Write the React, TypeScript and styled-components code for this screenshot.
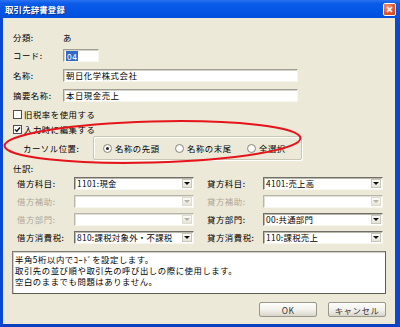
import React from "react";
import styled, { createGlobalStyle } from "styled-components";

const GlobalStyle = createGlobalStyle`
  html, body {
    margin: 0;
    padding: 0;
    background: #ece9d8;
  }
  body {
    width: 400px;
    height: 327px;
    overflow: hidden;
  }
`;

const uiFont = `"Noto Sans CJK JP", "Liberation Sans", sans-serif`;

const Window = styled.div`
  position: relative;
  width: 400px;
  height: 327px;
  display: flex;
  flex-direction: column;
  font-family: ${uiFont};
  font-size: 8.4px;
  letter-spacing: 0.55px;
  line-height: 13px;
  color: #000;
`;

const TitleBar = styled.div`
  flex: none;
  height: 18px;
  display: flex;
  align-items: center;
  justify-content: space-between;
  padding: 0 4px 0 5px;
  background: linear-gradient(#2b72ef 0%, #0a5be8 20%, #0355e4 60%, #0250dd 100%);
`;

const Title = styled.span`
  color: #fff;
  font-weight: bold;
  letter-spacing: 0.2px;
  text-shadow: 1px 1px 0 #0a2e8a;
`;

const CloseButton = styled.div`
  width: 13px;
  height: 13px;
  box-sizing: border-box;
  border: 1px solid #fff;
  border-radius: 2px;
  background: radial-gradient(circle at 35% 30%, #f09a7c, #e0542c 60%, #c4401c);
  display: flex;
  align-items: center;
  justify-content: center;
`;

const Body = styled.div`
  flex: 1;
  display: flex;
  flex-direction: column;
  background: #ece9d8;
  border-left: 3px solid #0a48d4;
  border-right: 5px solid #0a48d4;
  border-bottom: 3px solid #0a3fc0;
  padding: 0 9px;
`;

const FieldRow = styled.div<{ $space: number; $indent?: number }>`
  display: flex;
  align-items: center;
  height: 13px;
  margin-top: ${(p) => p.$space}px;
  padding-left: ${(p) => p.$indent ?? 1}px;
`;

const Label = styled.span<{ $width?: number; $disabled?: boolean }>`
  flex: none;
  width: ${(p) => (p.$width ? `${p.$width}px` : "auto")};
  white-space: nowrap;
  color: ${(p) => (p.$disabled ? "#aca899" : "#000")};
`;

const TextBox = styled.div<{ $width: number }>`
  box-sizing: border-box;
  width: ${(p) => p.$width}px;
  height: 13px;
  padding-left: 2px;
  background: #fff;
  border: 1px solid;
  border-color: #a09e92 #f6f5ee #f6f5ee #a09e92;
  box-shadow: inset 1px 1px 0 #d6d3c6;
  display: flex;
  align-items: center;
  white-space: nowrap;
`;

const Selected = styled.span`
  background: #316ac5;
  color: #fff;
  padding: 0 1px;
  line-height: 10px;
`;

const CheckRow = styled.label<{ $space: number }>`
  display: flex;
  align-items: center;
  gap: 2px;
  height: 13px;
  margin-top: ${(p) => p.$space}px;
  padding-left: 1px;
`;

const CheckBox = styled.span`
  flex: none;
  box-sizing: border-box;
  width: 9px;
  height: 9px;
  border: 1px solid #4d4d4d;
  background: #fff;
  display: flex;
  align-items: center;
  justify-content: center;
`;

const CursorRow = styled.div`
  display: flex;
  align-items: center;
  height: 24px;
  padding-left: 11px;
`;

const GroupBox = styled.div`
  box-sizing: border-box;
  width: 209px;
  height: 24px;
  border: 1px solid #c9c6b6;
  box-shadow: inset 1px 1px 0 #fff, 1px 1px 0 #fff;
  border-radius: 2px;
  display: flex;
  align-items: center;
  padding-left: 9px;
`;

const RadioItem = styled.span`
  flex: none;
  width: 72px;
  display: flex;
  align-items: center;
  gap: 3px;
  white-space: nowrap;
`;

const Radio = styled.span<{ $checked?: boolean }>`
  flex: none;
  box-sizing: border-box;
  width: 9px;
  height: 9px;
  border-radius: 50%;
  border: 1px solid #8b8a85;
  background: radial-gradient(circle, #fff 40%, #e4e2d8);
  display: flex;
  align-items: center;
  justify-content: center;
  &::after {
    content: "";
    display: ${(p) => (p.$checked ? "block" : "none")};
    width: 3px;
    height: 3px;
    border-radius: 50%;
    background: #222;
  }
`;

const LedgerList = styled.div`
  display: flex;
  flex-direction: column;
  gap: 5px;
  margin-top: 2px;
  padding-left: 5px;
`;

const LedgerRow = styled.div`
  display: flex;
  gap: 13px;
`;

const Side = styled.div`
  display: flex;
  align-items: center;
`;

const Combo = styled.div<{ $disabled?: boolean }>`
  box-sizing: border-box;
  width: 120px;
  height: 13px;
  background: #fff;
  border: 1px solid;
  border-color: ${(p) =>
    p.$disabled ? "#b7b4a8 #f6f5ee #f6f5ee #b7b4a8" : "#6f6e68 #f6f5ee #f6f5ee #6f6e68"};
  box-shadow: inset 1px 1px 0 ${(p) => (p.$disabled ? "#e2e0d6" : "#b9b6aa")};
  display: flex;
  align-items: center;
  justify-content: space-between;
  padding-left: 2px;
  letter-spacing: 0.3px;
`;

const ComboText = styled.span`
  white-space: nowrap;
  overflow: hidden;
`;

const DropButton = styled.span<{ $disabled?: boolean }>`
  flex: none;
  box-sizing: border-box;
  width: 10px;
  height: 9px;
  margin: 0 1px 0 2px;
  border: 1px solid ${(p) => (p.$disabled ? "#dedbd0" : "#c9c6ba")};
  background: linear-gradient(#fbfbf8, #e6e3d8);
  display: flex;
  align-items: center;
  justify-content: center;
  &::after {
    content: "";
    width: 0;
    height: 0;
    border-left: 3px solid transparent;
    border-right: 3px solid transparent;
    border-top: 3px solid ${(p) => (p.$disabled ? "#b5b2a6" : "#111")};
  }
`;

const Memo = styled.div`
  box-sizing: border-box;
  height: 43px;
  margin-top: 7px;
  padding: 2px 2px 0;
  background: #fff;
  border: 1px solid;
  border-color: #7c7a72 #5d5c57 #5d5c57 #7c7a72;
  box-shadow: inset 1px 1px 0 #d4d0c8;
  line-height: 11px;
`;

const ButtonBar = styled.div`
  display: flex;
  justify-content: flex-end;
  gap: 11px;
  margin-top: 8px;
`;

const Button = styled.button`
  box-sizing: border-box;
  width: 58px;
  height: 15px;
  padding: 0;
  font-family: ${uiFont};
  font-size: 8.4px;
  letter-spacing: 0.55px;
  color: #333;
  border: 1px solid #9a978c;
  border-radius: 2px;
  background: linear-gradient(#fefefd, #f2f1ec 50%, #e2dfd5 85%, #d4d0c5);
  display: flex;
  align-items: center;
  justify-content: center;
`;

const Overlay = styled.svg`
  position: absolute;
  left: 0;
  top: 0;
  pointer-events: none;
`;

type Ledger = {
  label: string;
  value: string;
  disabled?: boolean;
  width: number;
};

const rows: [Ledger, Ledger][] = [
  [
    { label: "借方科目:", value: "1101:現金", width: 57 },
    { label: "貸方科目:", value: "4101:売上高", width: 56 },
  ],
  [
    { label: "借方補助:", value: "", disabled: true, width: 57 },
    { label: "貸方補助:", value: "", disabled: true, width: 56 },
  ],
  [
    { label: "借方部門:", value: "", disabled: true, width: 57 },
    { label: "貸方部門:", value: "00:共通部門", width: 56 },
  ],
  [
    { label: "借方消費税:", value: "810:課税対象外・不課税", width: 57 },
    { label: "貸方消費税:", value: "110:課税売上", width: 56 },
  ],
];

function LedgerField({ item }: { item: Ledger }) {
  return (
    <Side>
      <Label $width={item.width} $disabled={item.disabled}>
        {item.label}
      </Label>
      <Combo $disabled={item.disabled}>
        <ComboText>{item.value}</ComboText>
        <DropButton $disabled={item.disabled} />
      </Combo>
    </Side>
  );
}

export default function App() {
  return (
    <Window>
      <GlobalStyle />
      <TitleBar>
        <Title>取引先辞書登録</Title>
        <CloseButton>
          <svg width="7" height="7" viewBox="0 0 7 7">
            <path d="M1 1L6 6M6 1L1 6" stroke="#fff" strokeWidth="1.5" />
          </svg>
        </CloseButton>
      </TitleBar>
      <Body>
        <FieldRow $space={13}>
          <Label $width={50}>分類:</Label>
          <span>あ</span>
        </FieldRow>
        <FieldRow $space={5}>
          <Label $width={50}>コード:</Label>
          <TextBox $width={36}>
            <Selected>04</Selected>
          </TextBox>
        </FieldRow>
        <FieldRow $space={7}>
          <Label $width={50}>名称:</Label>
          <TextBox $width={235}>朝日化学株式会社</TextBox>
        </FieldRow>
        <FieldRow $space={7}>
          <Label $width={50}>摘要名称:</Label>
          <TextBox $width={235}>本日現金売上</TextBox>
        </FieldRow>
        <CheckRow $space={6}>
          <CheckBox />
          旧税率を使用する
        </CheckRow>
        <CheckRow $space={2}>
          <CheckBox>
            <svg width="7" height="7" viewBox="0 0 7 7">
              <path d="M1 3.5L2.8 5.3L6 1.5" stroke="#111" strokeWidth="1.4" fill="none" />
            </svg>
          </CheckBox>
          入力時に編集する
        </CheckRow>
        <CursorRow>
          <Label $width={70}>カーソル位置:</Label>
          <GroupBox>
            <RadioItem>
              <Radio $checked />
              名称の先頭
            </RadioItem>
            <RadioItem>
              <Radio />
              名称の末尾
            </RadioItem>
            <RadioItem>
              <Radio />
              全選択
            </RadioItem>
          </GroupBox>
        </CursorRow>
        <FieldRow $space={2}>
          <Label>仕訳:</Label>
        </FieldRow>
        <LedgerList>
          {rows.map(([left, right], i) => (
            <LedgerRow key={i}>
              <LedgerField item={left} />
              <LedgerField item={right} />
            </LedgerRow>
          ))}
        </LedgerList>
        <Memo>
          半角5桁以内でｺｰﾄﾞを設定します。
          <br />
          取引先の並び順や取引先の呼び出しの際に使用します。
          <br />
          空白のままでも問題はありません。
        </Memo>
        <ButtonBar>
          <Button>OK</Button>
          <Button>キャンセル</Button>
        </ButtonBar>
      </Body>
      <Overlay width="400" height="327">
        <ellipse
          cx="152.5"
          cy="142"
          rx="148"
          ry="20.5"
          transform="rotate(-1.5 152.5 142)"
          fill="none"
          stroke="#e5141b"
          strokeWidth="2"
        />
      </Overlay>
    </Window>
  );
}
